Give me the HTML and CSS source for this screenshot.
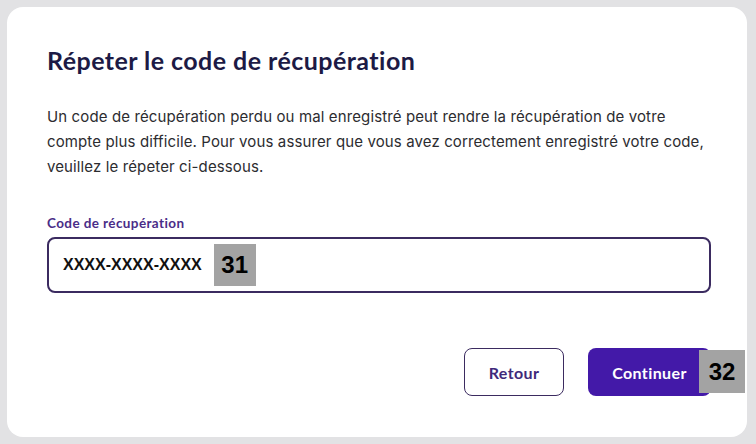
FILE: index.html
```html
<!DOCTYPE html>
<html lang="fr">
<head>
  <meta charset="UTF-8" />
  <meta name="viewport" content="width=device-width, initial-scale=1" />
  <title>Répeter le code de récupération</title>
  <link rel="stylesheet" href="styles.css">
</head>
<body>
  <div class="dialog">
    <h1>Répeter le code de récupération</h1>
    <p class="intro">
      Un code de récupération perdu ou mal enregistré peut rendre la récupération de votre
      compte plus difficile. Pour vous assurer que vous avez correctement enregistré votre code,
      veuillez le répeter ci-dessous.
    </p>

    <label class="field-label" for="code">Code de récupération</label>
    <div class="field">
      <span class="field-value">XXXX-XXXX-XXXX</span>
      <span class="tag">31</span>
    </div>

    <div class="actions">
      <button class="btn btn-outline">Retour</button>
      <div class="btn-wrap">
        <button class="btn btn-primary">Continuer</button>
        <span class="tag tag-over">32</span>
      </div>
    </div>
  </div>
</body>
</html>
```

FILE: styles.css
```css
body {
  margin: 0;
  padding: 7px 9px 7px 7px;
  background: #e2e2e4;
  font-family: Inter, "Noto Sans", sans-serif;
}
.dialog {
  height: 430px;
  box-sizing: border-box;
  padding: 37px 36px 0 40px;
  background: #fff;
  border-radius: 16px;
}
h1 {
  margin: 0;
  font-family: Lato, sans-serif;
  font-size: 25px;
  line-height: 32px;
  font-weight: 700;
  color: #1c1a45;
  letter-spacing: 0.45px;
}
.intro {
  margin: 28px 0 0;
  font-size: 15px;
  line-height: 25px;
  color: #2c2c30;
  letter-spacing: 0.12px;
}
.field-label {
  display: block;
  margin-top: 36px;
  font-family: Lato, sans-serif;
  font-size: 13.5px;
  line-height: 16px;
  font-weight: 700;
  color: #4a2d88;
  letter-spacing: 0.4px;
}
.field {
  display: flex;
  align-items: center;
  gap: 12px;
  height: 56px;
  box-sizing: border-box;
  margin-top: 6px;
  padding: 0 14px;
  border: 2px solid #3b2b60;
  border-radius: 8px;
}
.field-value {
  font-family: "Liberation Sans", Arial, sans-serif;
  font-weight: 700;
  font-size: 16px;
  color: #111;
}
.tag {
  display: flex;
  align-items: center;
  justify-content: center;
  width: 42px;
  height: 42px;
  background: #a3a3a3;
  font-family: "Liberation Sans", Arial, sans-serif;
  font-weight: 700;
  font-size: 24px;
  color: #000;
}
.actions {
  display: flex;
  justify-content: flex-end;
  gap: 24px;
  margin-top: 55px;
}
.btn {
  height: 48px;
  box-sizing: border-box;
  padding: 0;
  border-radius: 8px;
  font-family: Lato, sans-serif;
  font-size: 16px;
  font-weight: 700;
  letter-spacing: 0.4px;
}
.btn-outline {
  width: 100px;
  background: #fff;
  border: 1px solid #3b2b60;
  color: #40297a;
}
.btn-wrap {
  position: relative;
}
.btn-primary {
  width: 123px;
  background: #4319a8;
  border: none;
  color: #fff;
}
.tag-over {
  position: absolute;
  top: 2px;
  right: -34px;
  width: 46px;
  height: 43px;
}
```
